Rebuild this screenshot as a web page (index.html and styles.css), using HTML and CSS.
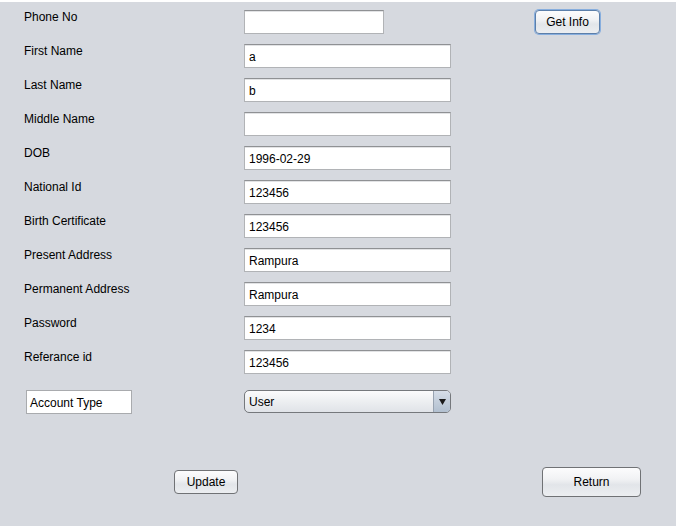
FILE: index.html
```html
<!DOCTYPE html>
<html>
<head>
<meta charset="utf-8">
<link rel="stylesheet" href="styles.css">
</head>
<body>
<div class="frame">
  <div class="row">
    <div class="label">Phone No</div>
    <div class="field short"></div>
    <button class="btn getinfo">Get Info</button>
  </div>
  <div class="row"><div class="label">First Name</div><div class="field">a</div></div>
  <div class="row"><div class="label">Last Name</div><div class="field">b</div></div>
  <div class="row"><div class="label">Middle Name</div><div class="field"></div></div>
  <div class="row"><div class="label">DOB</div><div class="field">1996-02-29</div></div>
  <div class="row"><div class="label">National Id</div><div class="field">123456</div></div>
  <div class="row"><div class="label">Birth Certificate</div><div class="field">123456</div></div>
  <div class="row"><div class="label">Present Address</div><div class="field">Rampura</div></div>
  <div class="row"><div class="label">Permanent Address</div><div class="field">Rampura</div></div>
  <div class="row"><div class="label">Password</div><div class="field">1234</div></div>
  <div class="row"><div class="label">Referance id</div><div class="field">123456</div></div>
  <div class="row account">
    <div class="label"><div class="acctbox">Account Type</div></div>
    <div class="combo">
      <span class="combo-text">User</span>
      <span class="combo-arrow"><svg width="7" height="6" viewBox="0 0 7 6"><path d="M0 0H7L3.5 6Z" fill="#1b1b1b"/></svg></span>
    </div>
  </div>
  <div class="actions">
    <button class="btn update">Update</button>
    <button class="btn ret">Return</button>
  </div>
</div>
</body>
</html>
```
FILE: styles.css
```css
html {
  background: #ffffff;
}
body {
  margin: 0;
  font-family: "Liberation Sans", Arial, sans-serif;
  font-size: 12px;
  color: #000;
}
.frame {
  width: 676px;
  height: 524px;
  margin-top: 2px;
  background: #d6d9df;
  box-sizing: border-box;
  padding: 8px 0 0 24px;
  overflow: hidden;
}
.row {
  display: flex;
  align-items: flex-start;
  height: 24px;
  margin-bottom: 10px;
}
.label {
  width: 220px;
  flex: none;
  line-height: 14px;
  color: #000;
}
.field {
  width: 207px;
  height: 24px;
  box-sizing: border-box;
  background: #fff;
  border: 1px solid #b1b3b6;
  border-top-color: #8f9194;
  box-shadow: inset 0 1px 0 #e2e3e5;
  padding: 5px 4px 0 4px;
  line-height: 14px;
}
.field.short {
  width: 140px;
}
.btn {
  font-family: "Liberation Sans", Arial, sans-serif;
  font-size: 12px;
  color: #000;
  border: 1px solid #707275;
  border-radius: 4px;
  background: linear-gradient(#fcfcfd 0%, #f1f2f4 40%, #e2e5e9 60%, #eceef1 100%);
  padding: 0;
  margin: 0;
  box-sizing: border-box;
}
.getinfo {
  width: 65px;
  height: 24px;
  margin-left: 151px;
  box-shadow: 0 0 0 1px #87aede;
  border-color: #5c7faa;
}
.account {
  margin-top: 16px;
}
.acctbox {
  width: 106px;
  height: 24px;
  margin-left: 2px;
  box-sizing: border-box;
  background: #fff;
  border: 1px solid #a9abae;
  padding: 5px 3px 0 3px;
  line-height: 14px;
}
.combo {
  width: 207px;
  height: 23px;
  box-sizing: border-box;
  border: 1px solid #75787c;
  border-radius: 5px;
  background: linear-gradient(#fbfbfc 0%, #eef0f2 45%, #e0e3e8 100%);
  display: flex;
  align-items: stretch;
  overflow: hidden;
}
.combo-text {
  flex: 1;
  padding: 4px 0 0 4px;
  line-height: 14px;
}
.combo-arrow {
  width: 16px;
  border-left: 1px solid #98a3b1;
  background: linear-gradient(#d6dee8 0%, #c3cedb 50%, #b2c0d0 100%);
  display: flex;
  align-items: center;
  justify-content: center;
}
.actions {
  display: flex;
  align-items: center;
  height: 30px;
  margin-top: 53px;
}
.update {
  width: 64px;
  height: 24px;
  margin-left: 150px;
}
.ret {
  width: 99px;
  height: 30px;
  margin-left: 304px;
}
```
